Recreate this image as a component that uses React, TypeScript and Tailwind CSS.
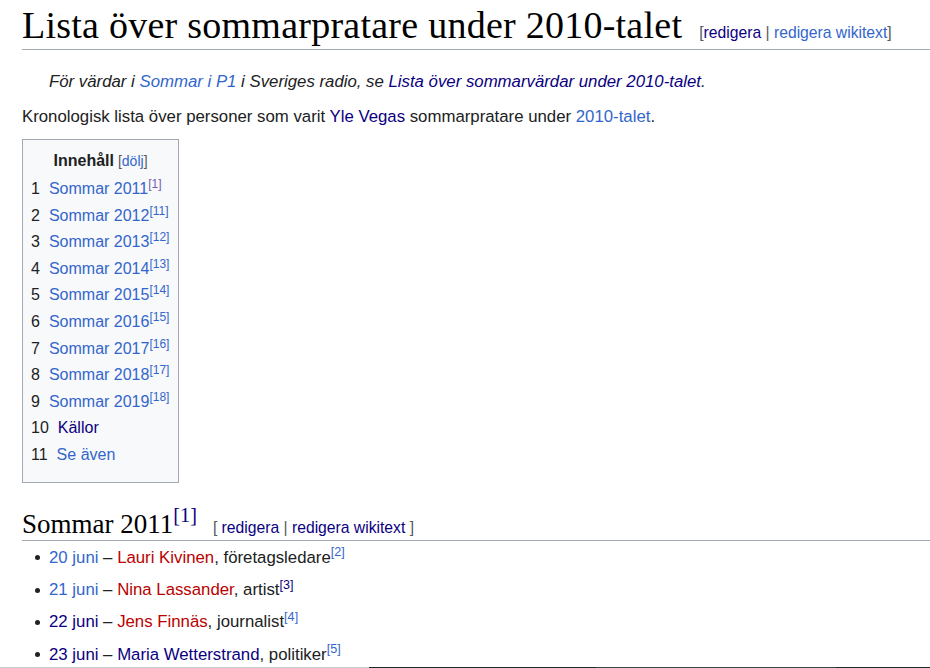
import React from 'react';

const sans = { fontFamily: '"Liberation Sans", Arial, sans-serif' };
const serif = { fontFamily: '"Liberation Serif", "Times New Roman", serif' };

const Ref = ({ n, tone = 'blue' }: { n: string; tone?: 'blue' | 'navy' | 'purple' }) => (
  <sup
    className={
      tone === 'navy' ? 'text-[#0b0080]' : tone === 'purple' ? 'text-[#795cb2]' : 'text-[#3366cc]'
    }
  >
    [{n}]
  </sup>
);

const tocItems = [
  { no: '1', label: 'Sommar 2011', ref: '1', refTone: 'purple' as const },
  { no: '2', label: 'Sommar 2012', ref: '11' },
  { no: '3', label: 'Sommar 2013', ref: '12' },
  { no: '4', label: 'Sommar 2014', ref: '13' },
  { no: '5', label: 'Sommar 2015', ref: '14' },
  { no: '6', label: 'Sommar 2016', ref: '15' },
  { no: '7', label: 'Sommar 2017', ref: '16' },
  { no: '8', label: 'Sommar 2018', ref: '17' },
  { no: '9', label: 'Sommar 2019', ref: '18' },
  { no: '10', label: 'Källor', visited: true },
  { no: '11', label: 'Se även' },
];

const Toc = () => (
  <div className="w-[157px] border border-[#a2a9b1] bg-[#f8f9fa] px-[8px] pt-[8px] pb-[13px] text-[16px]">
    <div className="h-[26px] flex items-center justify-center whitespace-nowrap">
      <span className="font-bold">Innehåll</span>
      <span className="ml-[4px] text-[14px] text-[#3366cc]">
        <span className="text-[#54595d]">[</span>dölj<span className="text-[#54595d]">]</span>
      </span>
    </div>
    <ul className="mt-[2px]">
      {tocItems.map((t) => (
        <li key={t.no} className="h-[26.6px] leading-[26.6px] whitespace-nowrap">
          <span className="pr-[9px]">{t.no}</span>
          <span className={t.visited ? 'text-[#0b0080]' : 'text-[#3366cc]'}>{t.label}</span>
          {t.ref && <Ref n={t.ref} tone={t.refTone ?? 'blue'} />}
        </li>
      ))}
    </ul>
  </div>
);

const people = [
  { date: '20 juni', dateVisited: false, name: 'Lauri Kivinen', red: true, role: 'företagsledare', ref: '2', refTone: 'blue' as const },
  { date: '21 juni', dateVisited: false, name: 'Nina Lassander', red: true, role: 'artist', ref: '3', refTone: 'navy' as const },
  { date: '22 juni', dateVisited: true, name: 'Jens Finnäs', red: true, role: 'journalist', ref: '4', refTone: 'blue' as const },
  { date: '23 juni', dateVisited: true, name: 'Maria Wetterstrand', red: false, role: 'politiker', ref: '5', refTone: 'blue' as const },
];

export default function App() {
  return (
    <div className="w-[930px] h-[668px] bg-white overflow-hidden text-[#202122] flex flex-col" style={sans}>
      <div className="h-[667px] overflow-hidden pl-[22px]">
        <h1 className="h-[50px] pt-[5px] flex items-baseline border-b border-[#a2a9b1] whitespace-nowrap">
          <span className="text-[38px] leading-[40px] tracking-[0.25px] text-black" style={serif}>
            Lista över sommarpratare under 2010-talet
          </span>
          <span className="ml-[17px] text-[15.7px] text-[#54595d]">
            [<span className="text-[#0b0080]">redigera</span> | <span className="text-[#3366cc]">redigera wikitext</span>]
          </span>
        </h1>

        <p className="mt-[19px] pl-[27px] italic text-[16.8px] leading-[26px]">
          För värdar i <span className="text-[#3366cc]">Sommar i P1</span> i Sveriges radio, se{' '}
          <span className="text-[#0b0080]">Lista över sommarvärdar under 2010-talet</span>.
        </p>

        <p className="mt-[9px] text-[16.8px] leading-[26px]">
          Kronologisk lista över personer som varit <span className="text-[#0b0080]">Yle Vegas</span> sommarpratare
          under <span className="text-[#3366cc]">2010-talet</span>.
        </p>

        <div className="mt-[9px] flex">
          <Toc />
        </div>

        <h2 className="mt-[25px] h-[33px] flex items-baseline border-b border-[#a2a9b1] whitespace-nowrap">
          <span className="text-[27px] leading-[32px] text-black" style={serif}>
            Sommar 2011<Ref n="1" tone="navy" />
          </span>
          <span className="ml-[16px] text-[15.7px] text-[#54595d]">
            [ <span className="text-[#0b0080]">redigera</span> | <span className="text-[#0b0080]">redigera wikitext</span> ]
          </span>
        </h2>

        <ul className="mt-[1px] pl-[13px] text-[16.8px]">
          {people.map((p) => (
            <li key={p.date} className="h-[32.4px] flex items-center gap-[9px] whitespace-nowrap">
              <span className="w-[5px] h-[5px] rounded-full bg-[#202122] shrink-0" />
              <span className="leading-[32.4px]">
                <span className={p.dateVisited ? 'text-[#0b0080]' : 'text-[#3366cc]'}>{p.date}</span> –{' '}
                <span className={p.red ? 'text-[#ba0000]' : 'text-[#0b0080]'}>{p.name}</span>, {p.role}
                <Ref n={p.ref} tone={p.refTone} />
              </span>
            </li>
          ))}
        </ul>
      </div>
      <div className="h-[1px] flex">
        <div className="w-[369px] bg-[#c8ccd1]" />
        <div className="w-[227px] bg-[#1b2b2b]" />
        <div className="w-[240px] bg-[#3a4a4a]" />
        <div className="flex-1 bg-[#1b2b2b]" />
      </div>
    </div>
  );
}
